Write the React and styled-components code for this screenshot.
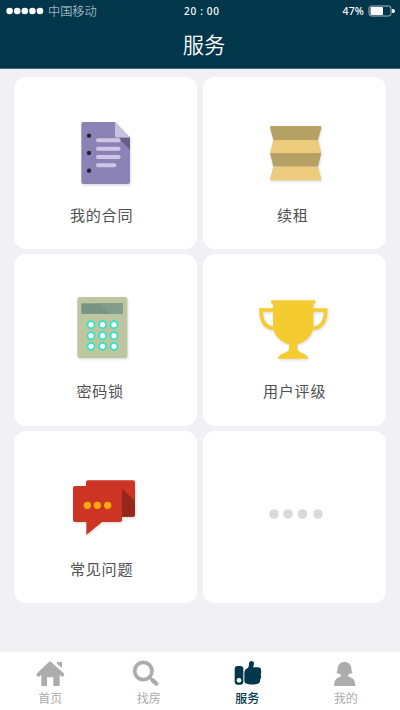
import React from "react";
import styled, { createGlobalStyle } from "styled-components";

const Global = createGlobalStyle`
  * { box-sizing: border-box; }
  body { margin: 0; background: #f0f0f5; font-family: "Noto Sans", "Noto Sans CJK SC", sans-serif; }
`;
const Screen = styled.div`
  width: 400px; height: 710px; display: flex; flex-direction: column;
  background: #f0f0f5; overflow: hidden;
`;
const Header = styled.header`
  height: 69px; flex: none; background: #02374b; color: #fff;
  border-bottom: 1px solid #456b7b;
`;
const StatusBar = styled.div`
  height: 22px; padding: 0 4px 0 6px;
  display: grid; grid-template-columns: 178px 1fr auto auto; align-items: center;
`;
const Carrier = styled.div`
  display: flex; align-items: center; gap: 4px; height: 22px;
  font: 300 12.2px/22px "Noto Sans CJK SC", sans-serif; color: #d3dde2;
`;
const Clock = styled.span`
  font: 500 10px/20px "Noto Sans", sans-serif; white-space: pre; letter-spacing: 0.7px;
  margin-bottom: 1px;
`;
const Battery = styled.span`
  font: 500 10.5px/20px "Noto Sans", sans-serif; margin-right: 4px; letter-spacing: 0.2px;
`;
const Title = styled.h1`
  margin: 0; padding-left: 8px; height: 46px; text-align: center;
  font: 350 21.3px/43px "Noto Sans CJK SC", sans-serif;
`;
const Grid = styled.main`
  flex: 1; padding: 8px 14px 0; display: grid;
  grid-template-columns: 183px 183px; grid-auto-rows: 172px; gap: 5px 6px; align-content: start;
`;
const Card = styled.section`
  background: #fff; border-radius: 12px; display: flex; flex-direction: column;
  padding-top: ${p => p.$top}px;
`;
const Art = styled.svg`
  width: 90px; height: 80px; flex: none; margin-left: ${p => p.$left}px;
  overflow: visible;
  .shade { filter: drop-shadow(2px 4px 3px rgba(0, 0, 0, 0.14)); }
`;
const Label = styled.div`
  margin: ${p => p.$gap}px 0 0 ${p => p.$left}px;
  font: 400 15.1px/24px "Noto Sans CJK SC", sans-serif; letter-spacing: 0.7px; color: #505050;
  white-space: nowrap;
`;
const TabBar = styled.nav`
  height: 58px; flex: none; background: #fff; padding-left: 1px;
  display: grid; grid-template-columns: repeat(4, 98.5px);
`;
const Tab = styled.div`
  display: flex; flex-direction: column; align-items: center;
  padding-top: 8px; color: ${p => (p.$active ? "#02374b" : "#acacac")};
  svg { width: 32px; height: 28px; flex: none; overflow: visible; }
  span { font: ${p => (p.$active ? 500 : 400)} 12px/19px "Noto Sans CJK SC", sans-serif; }
`;

const Contract = () => (
  <g className="shade">
    <path d="M70 36H165L210 83V216q0 6-6 6H70q-6 0-6-6V42q0-6 6-6Z" fill="#8b82b5" />
    <path d="M165 36L210 83H171q-6 0-6-6Z" fill="#c7c0df" />
    <path d="M174 83H210V119Z" fill="#685e86" />
    <g fill="#24222d"><circle cx="87" cy="77" r="6.5" /><circle cx="87" cy="129" r="6.5" /><circle cx="87" cy="182" r="6.5" /></g>
    <g stroke="#cec7e5" strokeWidth="12" strokeLinecap="round">
      <path d="M114 91H176M114 116H176M114 141H176M114 166H163" />
    </g>
  </g>
);
const Folded = () => (
  <g className="shade">
    <path d="M64 48H210q5 0 4 5L204 90H70L60 53q-1-5 4-5Z" fill="#b6a165" />
    <path d="M70 90H204L214 129H60Z" fill="#edcb7d" />
    <path d="M60 129H214L204 170H70Z" fill="#b6a165" />
    <path d="M70 170H204L214 206q1 5-4 5H64q-5 0-4-5Z" fill="#edcb7d" />
  </g>
);
const Calculator = () => (
  <g className="shade">
    <rect x="52" y="36" width="150" height="183" rx="8" fill="#bdc69f" />
    <rect x="64" y="55" width="124" height="32" fill="#789482" />
    <path d="M120 55H188V87H150Z" fill="#839d8b" />
    <g fill="#fff" stroke="#2ce4cc" strokeWidth="5.5">
      {[119, 152, 184].map(y => [93, 128, 162].map(x => <circle key={`${x}-${y}`} cx={x} cy={y} r="10.5" />))}
    </g>
  </g>
);
const Trophy = () => (
  <g className="shade" fill="#f4cc2f">
    <path d="M72 46H199q3 0 3 4 0 6-6 6V119C196 151 174 170 148 178V193Q151 201 168 206Q180 212 180 221H90Q90 212 103 206Q120 201 123 193V178C97 170 75 151 75 119V56q-6 0-6-6 0-4 3-4Z" />
    <path d="M80 75H39C39 106 50 130 82 130M192 75H233C233 106 222 130 190 130" fill="none" stroke="#f4cc2f" strokeWidth="11" />
  </g>
);
const Chat = () => (
  <g className="shade">
    <path d="M84 46H219q6 0 6 6V149q0 6-6 6H84q-6 0-6-6V52q0-6 6-6Z" fill="#cc3423" />
    <path d="M185 70L225 108V149q0 6-6 6H185Z" fill="#982719" />
    <path d="M45 63H180q6 0 6 6V165q0 6-6 6H126L79 210V171H45q-6 0-6-6V69q0-6 6-6Z" fill="#cc3423" />
    <g fill="#fcac09"><circle cx="82" cy="121" r="11" /><circle cx="112" cy="121" r="11" /><circle cx="143" cy="121" r="11" /></g>
  </g>
);
const More = () => (
  <g fill="#dadada">{[72, 114, 157, 204].map(x => <circle key={x} cx={x} cy="147" r="14.5" />)}</g>
);

const services = [
  { art: Contract, label: "我的合同", top: 33, left: 46, gap: 12, text: 56 },
  { art: Folded, label: "续租", top: 33, left: 47, gap: 12, text: 74 },
  { art: Calculator, label: "密码锁", top: 31, left: 46, gap: 13, text: 62.5 },
  { art: Trophy, label: "用户评级", top: 31, left: 45, gap: 13, text: 60 },
  { art: Chat, label: "常见问题", top: 34, left: 46, gap: 11, text: 56 },
  { art: More, label: "", top: 34, left: 47, gap: 11, text: 0 },
];

const Home = () => (
  <svg viewBox="0 0 96 84" fill="currentColor">
    <path d="M48 3L89 40q4 5 0 8-4 3-8 0l-4-3V75q0 3-3 3H58V52H39V78H25q-3 0-3-3V45l-5 4q-4 3-8-1-4-4 1-9Z" />
    <path d="M69 6H84V24L69 11Z" />
  </svg>
);
const Search = () => (
  <svg viewBox="8 0 96 84" fill="none" stroke="currentColor">
    <circle cx="39" cy="33" r="26" strokeWidth="11" /><path d="M57 51L67 61" strokeWidth="8" /><path d="M67 61L78 71" strokeWidth="13" strokeLinecap="round" />
  </svg>
);
const Thumb = () => (
  <svg viewBox="-8 0 96 84" fill="currentColor">
    <rect x="3" y="18" width="26" height="56" rx="9" />
    <circle cx="16" cy="61" r="7" fill="#fff" />
    <path d="M32 36Q33 29 41 25Q47 20 46 11C46 1 60 0 61 10Q61 16 58 22H72Q84 23 82 33Q84 36 81 43Q84 51 80 58Q80 70 70 72Q54 76 41 71Q32 71 32 62Z" />
  </svg>
);
const User = () => (
  <svg viewBox="3 0 96 84" fill="currentColor">
    <path d="M46 6C58 6 67 14 67 26Q67 34 71 39Q66 41 61 41Q57 45 57 49L68 54Q79 59 79 78H15Q15 59 26 54L36 49Q36 45 32 41Q26 41 22 38Q26 34 26 26C26 14 35 6 46 6Z" />
  </svg>
);

const tabs = [["首页", Home], ["找房", Search], ["服务", Thumb], ["我的", User]];

export default function App() {
  return (
    <Screen>
      <Global />
      <Header>
        <StatusBar>
          <Carrier>
            <svg width="38" height="8" fill="#fff">{[3.6, 11.2, 18.8, 26.4, 34].map(x => <circle key={x} cx={x} cy="4" r="3.3" />)}</svg>
            中国移动
          </Carrier>
          <Clock>{"20 : 00"}</Clock>
          <Battery>47%</Battery>
          <svg width="28" height="12" fill="none">
            <rect x="1" y="1" width="22" height="10" rx="2.5" stroke="#a9bbc3" />
            <rect x="2.5" y="2" width="12.5" height="8" rx="1" fill="#fff" />
            <path d="M24 4q3 0 3 2t-3 2Z" fill="#fff" />
          </svg>
        </StatusBar>
        <Title>服务</Title>
      </Header>
      <Grid>
        {services.map(({ art: Drawing, label, top, left, gap, text }, i) => (
          <Card key={i} $top={top}>
            <Art $left={left} viewBox="0 0 270 240"><Drawing /></Art>
            {label && <Label $gap={gap} $left={text}>{label}</Label>}
          </Card>
        ))}
      </Grid>
      <TabBar>
        {tabs.map(([name, Icon]) => (
          <Tab key={name} $active={name === "服务"}><Icon /><span>{name}</span></Tab>
        ))}
      </TabBar>
    </Screen>
  );
}
